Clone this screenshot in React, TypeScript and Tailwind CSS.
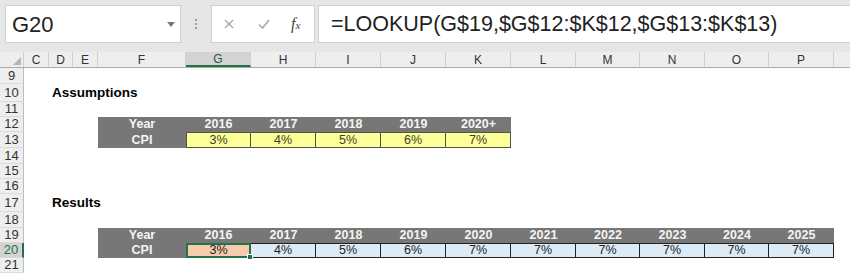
const cols = [
  { l: 'C', w: 25 },
  { l: 'D', w: 24 },
  { l: 'E', w: 25 },
  { l: 'F', w: 88 },
  { l: 'G', w: 65 },
  { l: 'H', w: 65 },
  { l: 'I', w: 65 },
  { l: 'J', w: 65 },
  { l: 'K', w: 65 },
  { l: 'L', w: 65 },
  { l: 'M', w: 64 },
  { l: 'N', w: 65 },
  { l: 'O', w: 64 },
  { l: 'P', w: 65 },
];

const assumptions = [
  { year: '2016', cpi: '3%' },
  { year: '2017', cpi: '4%' },
  { year: '2018', cpi: '5%' },
  { year: '2019', cpi: '6%' },
  { year: '2020+', cpi: '7%' },
];

const results = [
  { year: '2016', cpi: '3%', w: 65 },
  { year: '2017', cpi: '4%', w: 65 },
  { year: '2018', cpi: '5%', w: 65 },
  { year: '2019', cpi: '6%', w: 65 },
  { year: '2020', cpi: '7%', w: 65 },
  { year: '2021', cpi: '7%', w: 65 },
  { year: '2022', cpi: '7%', w: 64 },
  { year: '2023', cpi: '7%', w: 65 },
  { year: '2024', cpi: '7%', w: 64 },
  { year: '2025', cpi: '7%', w: 65 },
];

const RowHead = ({ n, h, active = false }: { n: number; h: string; active?: boolean }) => (
  <div
    className={`${h} w-[24px] shrink-0 flex items-center justify-center text-[13px] border-b border-[#dadada] ${
      active ? 'bg-[#d3d3d3] text-[#217346] border-r-2 border-r-[#217346]' : 'bg-[#eeeeee] text-[#333] border-r border-r-[#bdbdbd]'
    }`}
  >
    {n}
  </div>
);

const HeaderRow = ({ label, years }: { label: string; years: { year: string; w: number }[] }) => (
  <div className="flex h-full ml-[74px] bg-[#777777] text-[#f4f4f4] font-bold text-[12.5px]">
    <div className="w-[88px] flex items-center justify-center">{label}</div>
    {years.map((y) => (
      <div key={y.year} style={{ width: y.w }} className="flex items-center justify-center">
        {y.year}
      </div>
    ))}
  </div>
);

export default function App() {
  return (
    <div className="w-[850px] h-[273px] overflow-hidden bg-white font-['Liberation_Sans',Arial,sans-serif]">
      {/* formula bar */}
      <div className="h-[52px] bg-[#e6e6e6] flex pt-[5px] pl-[5px] gap-0">
        <div className="relative w-[176px] h-[38px] bg-white border border-[#d0d0d0] flex items-center pl-[6px] text-[22px] text-[#222]">
          G20
          <svg className="absolute right-[5px] top-[16px]" width="8" height="5" viewBox="0 0 8 5">
            <path d="M0 0h8L4 5z" fill="#777" />
          </svg>
        </div>
        <div className="w-[30px] h-[38px] flex flex-col items-center justify-center gap-[2px]">
          <div className="w-[2px] h-[2px] bg-[#9a9a9a]" />
          <div className="w-[2px] h-[2px] bg-[#9a9a9a]" />
          <div className="w-[2px] h-[2px] bg-[#9a9a9a]" />
        </div>
        <div className="w-[104px] h-[38px] bg-white border border-[#d0d0d0] flex items-center">
          <svg className="ml-[12px]" width="10" height="10" viewBox="0 0 10 10">
            <path d="M1 1L9 9M9 1L1 9" stroke="#a8a8a8" strokeWidth="1.4" />
          </svg>
          <svg className="ml-[24px]" width="12" height="10" viewBox="0 0 12 10">
            <path d="M1 5.5L4.5 9L11 1" stroke="#a8a8a8" strokeWidth="1.6" fill="none" />
          </svg>
          <span className="ml-[21px] font-['Liberation_Serif',serif] italic text-[16px] text-[#444] leading-none">
            f<span className="text-[11px]">x</span>
          </span>
        </div>
        <div className="ml-[3px] flex-1 h-[38px] bg-white border border-r-0 border-[#d0d0d0] flex items-center pl-[12px] text-[21.5px] text-[#222]">
          =LOOKUP(G$19,$G$12:$K$12,$G$13:$K$13)
        </div>
      </div>

      {/* column headers */}
      <div className="h-[16px] flex bg-[#eeeeee] border-b border-[#ababab] text-[12px] text-[#333]">
        <div className="w-[24px] shrink-0 relative border-r border-[#d0d0d0]">
          <svg className="absolute right-[2px] bottom-[2px]" width="8" height="8" viewBox="0 0 8 8">
            <path d="M8 0V8H0z" fill="#b5b5b5" />
          </svg>
        </div>
        {cols.map((c) => (
          <div
            key={c.l}
            style={{ width: c.w }}
            className={`shrink-0 flex items-center justify-center border-r border-[#d0d0d0] ${
              c.l === 'G' ? 'bg-[#d3d3d3] text-[#1e5c3a] border-b-2 border-b-[#217346]' : ''
            }`}
          >
            {c.l}
          </div>
        ))}
        <div className="flex-1" />
      </div>

      {/* rows */}
      <div className="flex flex-col">
        <div className="flex h-[16px]"><RowHead n={9} h="h-[16px]" /></div>
        <div className="flex h-[18px]">
          <RowHead n={10} h="h-[18px]" />
          <div className="ml-[28px] flex items-center font-bold text-[13.5px] text-black">Assumptions</div>
        </div>
        <div className="flex h-[15px]"><RowHead n={11} h="h-[15px]" /></div>
        <div className="flex h-[15px]">
          <RowHead n={12} h="h-[15px]" />
          <HeaderRow label="Year" years={assumptions.map((a) => ({ year: a.year, w: 65 }))} />
        </div>
        <div className="flex h-[16px]">
          <RowHead n={13} h="h-[16px]" />
          <div className="flex h-full ml-[74px] bg-[#777777] text-[12.5px]">
            <div className="w-[88px] flex items-center justify-center text-[#f4f4f4] font-bold">CPI</div>
            {assumptions.map((a, i) => (
              <div
                key={a.year}
                className={`w-[65px] flex items-center justify-center bg-[#ffff99] text-[#3c3c2c] border-y border-r border-[#4b5848] ${
                  i === 0 ? 'border-l' : ''
                }`}
              >
                {a.cpi}
              </div>
            ))}
          </div>
        </div>
        <div className="flex h-[16px]"><RowHead n={14} h="h-[16px]" /></div>
        <div className="flex h-[15px]"><RowHead n={15} h="h-[15px]" /></div>
        <div className="flex h-[15px]"><RowHead n={16} h="h-[15px]" /></div>
        <div className="flex h-[18px]">
          <RowHead n={17} h="h-[18px]" />
          <div className="ml-[28px] flex items-center font-bold text-[13.5px] text-black">Results</div>
        </div>
        <div className="flex h-[16px]"><RowHead n={18} h="h-[16px]" /></div>
        <div className="flex h-[15px]">
          <RowHead n={19} h="h-[15px]" />
          <HeaderRow label="Year" years={results} />
        </div>
        <div className="flex h-[15px]">
          <RowHead n={20} h="h-[15px]" active />
          <div className="flex h-full ml-[74px] bg-[#777777] text-[12.5px]">
            <div className="w-[88px] flex items-center justify-center text-[#f4f4f4] font-bold">CPI</div>
            {results.map((r, i) =>
              i === 0 ? (
                <div
                  key={r.year}
                  className="relative w-[65px] flex items-center justify-center bg-[#f8cbad] text-[#222] border-2 border-[#217346]"
                >
                  {r.cpi}
                  <div className="absolute -right-[4px] -bottom-[4px] w-[6px] h-[6px] bg-[#217346] border border-white" />
                </div>
              ) : (
                <div
                  key={r.year}
                  style={{ width: r.w }}
                  className="flex items-center justify-center bg-[#ddebf7] text-[#222] border-y border-r border-[#222]"
                >
                  {r.cpi}
                </div>
              )
            )}
          </div>
        </div>
        <div className="flex h-[15px]"><RowHead n={21} h="h-[15px]" /></div>
      </div>
    </div>
  );
}
